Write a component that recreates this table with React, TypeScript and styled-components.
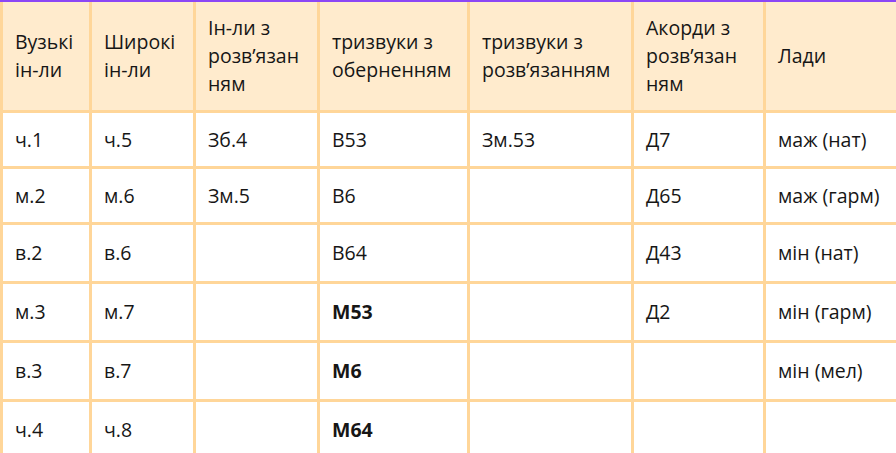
import React from 'react';
import styled, { createGlobalStyle } from 'styled-components';

const GlobalStyle = createGlobalStyle`
  html, body {
    margin: 0;
    padding: 0;
    background: #ffffff;
    overflow: hidden;
  }
  body {
    font-family: 'Open Sans', 'Noto Sans', sans-serif;
  }
`;

const TableWrapper = styled.div`
  width: 900px;
  border-top: 2px solid #8b46f6;
`;

const Table = styled.table`
  width: 900px;
  table-layout: fixed;
  border-collapse: collapse;
  font-size: 19.5px;
  line-height: 28px;
  color: #161616;
`;

const HeadCell = styled.th<{ $padRight?: number }>`
  background-color: #ffebcd;
  border: 3px solid #ffd699;
  border-top: none;
  padding: 12px ${(p) => p.$padRight ?? 12}px 12px 12px;
  text-align: left;
  font-weight: 400;
  vertical-align: middle;
  overflow-wrap: break-word;
  word-break: break-word;
`;

const Cell = styled.td<{ $tall?: boolean; $bold?: boolean }>`
  border: 3px solid #ffd699;
  padding: ${(p) => (p.$tall ? '14px 12px' : '12.5px 12px')};
  vertical-align: middle;
  font-weight: ${(p) => (p.$bold ? 700 : 400)};
`;

const widths = [89, 104, 124, 150, 164, 132, 137];

const headers = [
  { text: 'Вузькі ін-ли' },
  { text: 'Широкі ін-ли' },
  { text: 'Ін-ли з розв’язанням', pad: 14 },
  { text: 'тризвуки з оберненням' },
  { text: 'тризвуки з розв’язанням' },
  { text: 'Акорди з розв’язанням', pad: 17 },
  { text: 'Лади' },
];

const rows: string[][] = [
  ['ч.1', 'ч.5', 'Зб.4', 'В53', 'Зм.53', 'Д7', 'маж (нат)'],
  ['м.2', 'м.6', 'Зм.5', 'В6', '', 'Д65', 'маж (гарм)'],
  ['в.2', 'в.6', '', 'В64', '', 'Д43', 'мін (нат)'],
  ['м.3', 'м.7', '', 'М53', '', 'Д2', 'мін (гарм)'],
  ['в.3', 'в.7', '', 'М6', '', '', 'мін (мел)'],
  ['ч.4', 'ч.8', '', 'М64', '', '', ''],
];

export default function App() {
  return (
    <>
      <GlobalStyle />
      <TableWrapper>
        <Table>
          <colgroup>
            {widths.map((w, i) => (
              <col key={i} style={{ width: w }} />
            ))}
          </colgroup>
          <thead>
            <tr>
              {headers.map((h) => (
                <HeadCell key={h.text} $padRight={h.pad}>
                  {h.text}
                </HeadCell>
              ))}
            </tr>
          </thead>
          <tbody>
            {rows.map((row, r) => (
              <tr key={r}>
                {row.map((c, i) => (
                  <Cell key={i} $tall={r >= 2} $bold={r >= 3 && i === 3}>
                    {c}
                  </Cell>
                ))}
              </tr>
            ))}
          </tbody>
        </Table>
      </TableWrapper>
    </>
  );
}
